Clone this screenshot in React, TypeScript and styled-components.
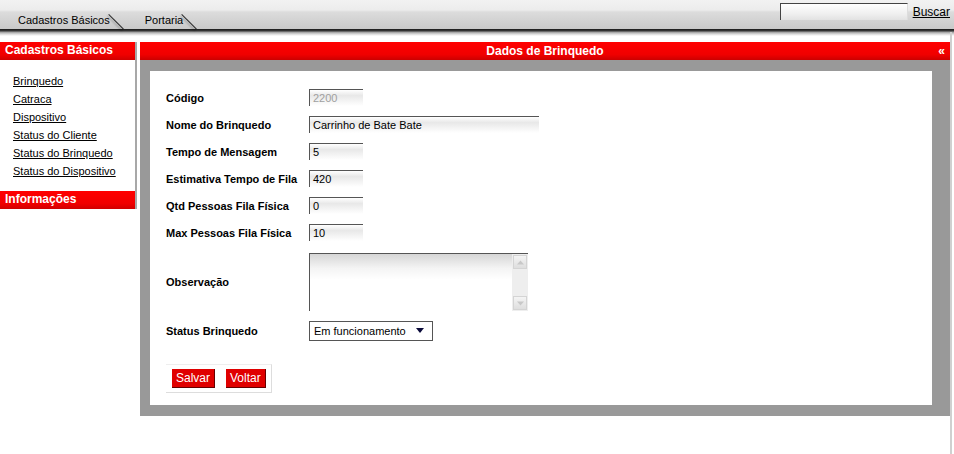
import styled, { createGlobalStyle } from "styled-components"

const GlobalStyle = createGlobalStyle`
	html, body {
		margin: 0;
		padding: 0;
		background: #fff;
		font-family: "Liberation Sans", Arial, sans-serif;
		font-size: 11px;
		color: #000;
	}
`

const fields = [
	{ label: "Código", value: "2200", wide: false, disabled: true },
	{ label: "Nome do Brinquedo", value: "Carrinho de Bate Bate", wide: true, disabled: false },
	{ label: "Tempo de Mensagem", value: "5", wide: false, disabled: false },
	{ label: "Estimativa Tempo de Fila", value: "420", wide: false, disabled: false },
	{ label: "Qtd Pessoas Fila Física", value: "0", wide: false, disabled: false },
	{ label: "Max Pessoas Fila Física", value: "10", wide: false, disabled: false },
]

const links = [
	"Brinquedo",
	"Catraca",
	"Dispositivo",
	"Status do Cliente",
	"Status do Brinquedo",
	"Status do Dispositivo",
]

const App = () => {
	return (
		<Page>
			<GlobalStyle />
			<TopBar>
				<Tabs>
					<Tab>Cadastros Básicos</Tab>
					<Tab>Portaria</Tab>
				</Tabs>
				<Search>
					<SearchInput />
					<SearchLink href="#">Buscar</SearchLink>
				</Search>
			</TopBar>
			<TopShadow />

			<Body>
				<Sidebar>
					<SideHeader>Cadastros Básicos</SideHeader>
					<LinkList>
						{links.map((l) => (
							<SideLink key={l} href="#">
								{l}
							</SideLink>
						))}
					</LinkList>
					<SideHeader>Informações</SideHeader>
				</Sidebar>

				<Main>
					<MainHeader>
						Dados de Brinquedo
						<Collapse>«</Collapse>
					</MainHeader>
					<GrayFrame>
						<FormCard>
							<FormGrid>
								{fields.map((f) => (
									<Row key={f.label}>
										<Label>{f.label}</Label>
										<TextInput $wide={f.wide} $disabled={f.disabled}>
											{f.value}
										</TextInput>
									</Row>
								))}
								<Row $tall>
									<Label>Observação</Label>
									<TextArea>
										<ScrollBar>
											<ScrollBtn>
												<svg width="7" height="5" viewBox="0 0 7 5">
													<path d="M0 4.5 L3.5 0.5 L7 4.5 Z" fill="#c8c8c8" />
												</svg>
											</ScrollBtn>
											<ScrollBtn>
												<svg width="7" height="5" viewBox="0 0 7 5">
													<path d="M0 0.5 L3.5 4.5 L7 0.5 Z" fill="#c8c8c8" />
												</svg>
											</ScrollBtn>
										</ScrollBar>
									</TextArea>
								</Row>
								<Row $select>
									<Label>Status Brinquedo</Label>
									<Select>
										Em funcionamento
										<svg width="8" height="5" viewBox="0 0 8 5">
											<path d="M0 0 L8 0 L4 5 Z" fill="#0a0a3a" />
										</svg>
									</Select>
								</Row>
							</FormGrid>
							<ButtonBox>
								<RedButton>Salvar</RedButton>
								<RedButton>Voltar</RedButton>
							</ButtonBox>
						</FormCard>
					</GrayFrame>
				</Main>
				<RightRule />
			</Body>
		</Page>
	)
}

const Page = styled.div`
	width: 954px;
	height: 454px;
	overflow: hidden;
	position: relative;
`

const TopBar = styled.div`
	height: 29px;
	display: flex;
	align-items: flex-start;
	justify-content: space-between;
	background: linear-gradient(to bottom, #f2f2f2 0px, #ececec 10px, #dcdcdc 12px, #c9c9c9 29px);
`

const Tabs = styled.div`
	display: flex;
	padding-top: 13px;
	padding-left: 18px;
	gap: 23px;
`

const Tab = styled.div`
	position: relative;
	font-size: 11px;
	line-height: 14px;
	padding-right: 12px;
	&::after {
		content: "";
		position: absolute;
		left: calc(100% - 13px);
		top: 1px;
		width: 21px;
		height: 1px;
		background: #2a2a2a;
		transform-origin: left top;
		transform: rotate(45deg);
		box-shadow: 0 2px 2px rgba(0, 0, 0, 0.3);
	}
`

const Search = styled.div`
	display: flex;
	align-items: center;
	gap: 5px;
	padding-top: 3px;
	padding-right: 4px;
`

const SearchInput = styled.div`
	width: 126px;
	height: 16px;
	border-top: 1px solid #444;
	border-left: 1px solid #444;
	border-right: 1px solid #ddd;
	background: linear-gradient(to bottom, #fff 0%, #f0f0f0 60%, #e2e2e2 100%);
`

const SearchLink = styled.a`
	color: #000;
	font-size: 12px;
	text-decoration: underline;
`

const TopShadow = styled.div`
	height: 7px;
	background: linear-gradient(to bottom, #1a1a1a 0px, #3a3a3a 2px, #9a9a9a 3px, #d8d8d8 5px, #fff 7px);
`

const Body = styled.div`
	display: flex;
	align-items: flex-start;
	padding-top: 6px;
	position: relative;
`

const Sidebar = styled.div`
	width: 135px;
	border-right: 2px solid #a8a8a8;
	flex-shrink: 0;
`

const SideHeader = styled.div`
	height: 18px;
	line-height: 17px;
	padding-left: 5px;
	background: linear-gradient(to bottom, #ff0000 0%, #f00000 70%, #d00000 100%);
	color: #fff;
	font-weight: bold;
	font-size: 12px;
`

const LinkList = styled.div`
	display: flex;
	flex-direction: column;
	padding: 12px 0 11px 13px;
`

const SideLink = styled.a`
	color: #000;
	font-size: 11px;
	line-height: 18px;
	text-decoration: underline;
`

const Main = styled.div`
	margin-left: 3px;
	width: 810px;
`

const MainHeader = styled.div`
	position: relative;
	height: 18px;
	line-height: 18px;
	text-align: center;
	color: #fff;
	font-weight: bold;
	font-size: 12px;
	background: linear-gradient(to bottom, #ff0000 0%, #f00000 70%, #cc0000 100%);
`

const Collapse = styled.span`
	position: absolute;
	right: 5px;
	top: 0;
	font-size: 12px;
`

const GrayFrame = styled.div`
	background: #999;
	padding: 11px 18px 11px 10px;
`

const FormCard = styled.div`
	background: #fff;
	height: 321px;
	padding: 13px 0 0 16px;
`

const FormGrid = styled.div`
	display: flex;
	flex-direction: column;
`

const Row = styled.div<{ $tall?: boolean; $select?: boolean }>`
	display: flex;
	align-items: center;
	height: ${(p) => (p.$tall ? "60px" : "27px")};
	margin-top: ${(p) => (p.$tall ? "6px" : p.$select ? "5px" : "0")};
`

const Label = styled.div`
	width: 143px;
	font-weight: bold;
	font-size: 11px;
`

const TextInput = styled.div<{ $wide: boolean; $disabled: boolean }>`
	width: ${(p) => (p.$wide ? "226px" : "50px")};
	height: 16px;
	line-height: 16px;
	padding-left: 3px;
	font-size: 11px;
	color: ${(p) => (p.$disabled ? "#a0a0a0" : "#000")};
	border-top: 1px solid #555;
	border-left: 1px solid #555;
	background: linear-gradient(to bottom, #ffffff 0%, #e8e8e8 35%, #ffffff 100%);
`

const TextArea = styled.div`
	width: 218px;
	height: 57px;
	border-top: 1px solid #555;
	border-left: 1px solid #555;
	background: linear-gradient(to bottom, #d6d6d6 0%, #f4f4f4 25%, #fff 45%);
	display: flex;
	justify-content: flex-end;
`

const ScrollBar = styled.div`
	width: 16px;
	display: flex;
	flex-direction: column;
	justify-content: space-between;
	background: #eee;
`

const ScrollBtn = styled.div`
	width: 14px;
	height: 14px;
	margin: 1px;
	display: flex;
	align-items: center;
	justify-content: center;
	border: 1px solid #d4d4d4;
	background: linear-gradient(to bottom, #f4f4f4, #dedede);
	box-sizing: border-box;
`

const Select = styled.div`
	width: 110px;
	height: 18px;
	border: 1px solid #555;
	padding: 0 8px 0 4px;
	display: flex;
	align-items: center;
	justify-content: space-between;
	font-size: 11px;
	background: #fff;
`

const ButtonBox = styled.div`
	display: inline-flex;
	gap: 11px;
	margin-top: 20px;
	padding: 4px 5px 4px 6px;
	border-top: 1px solid #eee;
	border-right: 1px solid #ddd;
	border-bottom: 1px solid #ddd;
`

const RedButton = styled.button`
	height: 19px;
	padding: 0 4px;
	border: none;
	border-right: 1px solid #600;
	border-bottom: 1px solid #600;
	background: #e00000;
	color: #fff;
	font-family: "Liberation Sans", Arial, sans-serif;
	font-size: 12px;
`

const RightRule = styled.div`
	position: absolute;
	right: 2px;
	top: -4px;
	width: 2px;
	height: 460px;
	background: #d0d0d0;
`

export default App
